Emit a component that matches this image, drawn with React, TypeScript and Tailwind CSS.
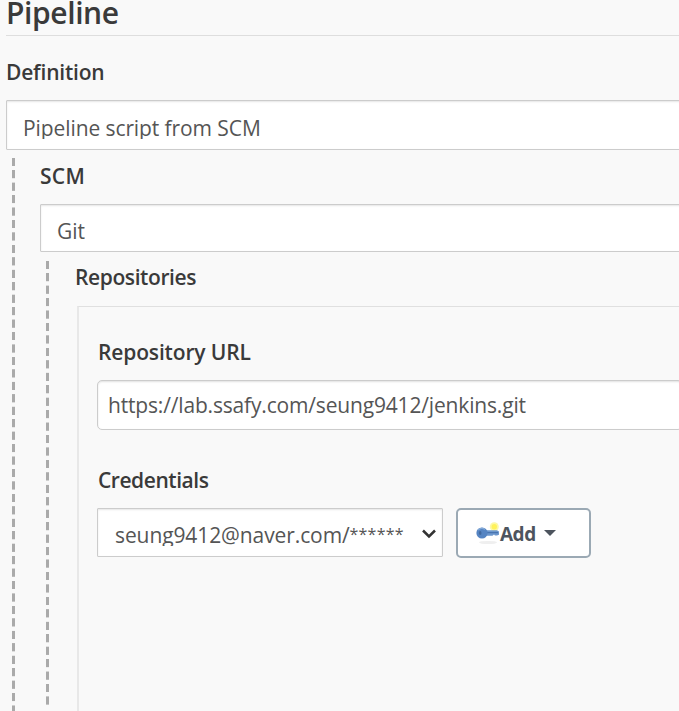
import type { ReactNode } from "react";

function Label({ children, className }: { children: ReactNode; className: string }) {
  return <div className={`flex items-center whitespace-nowrap text-[21px] font-semibold text-[#3a3a3a] ${className}`}>{children}</div>;
}

function Select({ children, className }: { children: ReactNode; className: string }) {
  return (
    <div
      className={`flex items-start rounded-[1px] border border-[#ccc] bg-white text-[21px] leading-[30px] text-[#555] shadow-[inset_0_1px_2px_rgba(0,0,0,0.1)] ${className}`}
    >
      {children}
    </div>
  );
}

function Dashes({ className }: { className: string }) {
  return (
    <div
      className={`w-[3px] shrink-0 bg-[repeating-linear-gradient(to_bottom,#aaa_0px,#aaa_7.5px,transparent_8.2px,transparent_11.8px,#aaa_12.45px)] ${className}`}
    />
  );
}

function KeyIcon() {
  return (
    <svg width="24" height="24" viewBox="0 0 24 24" className="mt-[2px] shrink-0">
      <ellipse cx="12" cy="20.5" rx="9" ry="1.6" fill="#efefef" />
      <circle cx="18.3" cy="4.7" r="4.5" fill="#fcf8a4" />
      <circle cx="18.3" cy="4.7" r="2.7" fill="#fff25a" />
      <path d="M9 8.3h12l2 1.2v3.2l-2 .8h-2l-1-1-1.5 1.2H9z" fill="#6c97cd" />
      <path d="M9 10.7h13" stroke="#416da8" strokeWidth="1" />
      <circle cx="6" cy="11" r="5.6" fill="#5584c2" />
      <path d="M2 8.2a5 5 0 0 1 7-.7" fill="none" stroke="#83a9d8" strokeWidth="1.3" />
      <ellipse cx="4.2" cy="11" rx="1.3" ry="2" fill="#41699f" />
    </svg>
  );
}

export default function App() {
  return (
    <div className="h-[711px] w-[679px] overflow-hidden bg-[#f9f9f9] pl-[6px] font-['Open_Sans','Noto_Sans',sans-serif]">
      <div className="flex h-[36px] items-end border-b border-[#dedede]">
        <h2 className="whitespace-nowrap pb-[2px] text-[30px] font-semibold leading-[40px] tracking-[-0.4px] text-[#3a3a3a]">Pipeline</h2>
      </div>
      <Label className="h-[64px] pt-[10px] tracking-[-0.2px]">Definition</Label>
      <Select className="-mr-1 h-[50px] pl-[16px]">
        <span className="mt-[12px] h-[26px] overflow-hidden whitespace-nowrap tracking-[-0.09px]">Pipeline script from SCM</span>
      </Select>
      <div className="flex h-[561px] pl-[6px]">
        <Dashes className="mt-[8px]" />
        <div className="w-[668px] shrink-0 pl-[25px]">
          <Label className="h-[54px] pb-[1px] tracking-[0.3px]">SCM</Label>
          <Select className="h-[48px] pl-[16px]">
            <span className="mt-[11px] h-[28px] overflow-hidden">Git</span>
          </Select>
          <div className="flex h-[459px] pl-[6px]">
            <Dashes className="mt-[9px] h-[446px]" />
            <div className="flex-1 pl-[26px]">
              <Label className="h-[54px] pb-[2px] tracking-[-0.4px]">Repositories</Label>
              <div className="ml-[2px] h-[420px] border-l-2 border-t border-l-[#e8e8e8] border-t-[#e0e0e0] pl-[18px]">
                <Label className="h-[73px] pl-px pt-[18px] tracking-[-0.15px]">Repository URL</Label>
                <div className="flex h-[50px] items-center rounded-[5px] border border-[#ccc] bg-white pl-[10px] pt-[2px] text-[21px] tracking-[-0.17px] text-[#555] shadow-[inset_0_1px_2px_rgba(0,0,0,0.12)]">
                  <span className="whitespace-nowrap">https://lab.ssafy.com/seung9412/jenkins.git</span>
                </div>
                <Label className="h-[78px] pl-px pt-[23px] tracking-[-0.45px]">Credentials</Label>
                <div className="flex h-[50px]">
                  <Select className="h-[49px] w-[346px] pl-[17px]">
                    <span className="mt-[11px] h-[26px] w-[292px] overflow-hidden whitespace-nowrap tracking-[-0.1px]">
                      seung9412@naver.com/<span className="align-[3px] text-[16px] leading-none tracking-[0.2px]">******</span>
                    </span>
                    <svg width="14" height="10" viewBox="0 0 14 10" className="ml-[15px] mt-[20px] shrink-0">
                      <path d="M1 1.5 7 7.5 13 1.5" fill="none" stroke="#333" strokeWidth="2.5" />
                    </svg>
                  </Select>
                  <button className="ml-[13px] flex h-[50px] w-[135px] items-center rounded-[5px] border-2 border-[#9ba9b4] bg-white pl-[18px] text-[#4d545e]">
                    <KeyIcon />
                    <span className="pt-[2px] text-[19px] font-bold tracking-[-0.5px]">Add</span>
                    <svg width="12" height="6" viewBox="0 0 12 6" className="-mt-[1px] ml-[8px]">
                      <path d="M0 0h12L6 6z" fill="#4d545e" />
                    </svg>
                  </button>
                </div>
              </div>
            </div>
          </div>
        </div>
      </div>
    </div>
  );
}
